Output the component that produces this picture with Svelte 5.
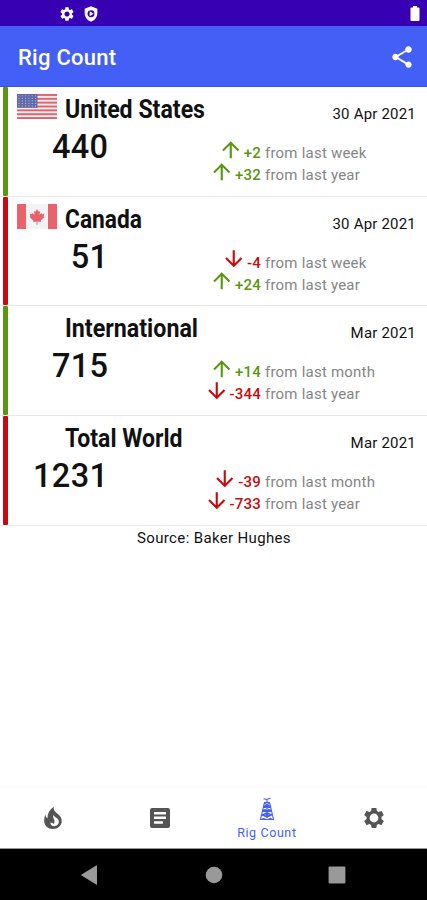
<script lang="ts">
	interface Change {
		value: number;
		period: string;
	}

	interface Region {
		name: string;
		width: number;
		flag?: 'us' | 'ca';
		count: number;
		date: string;
		up: boolean;
		changes: Change[];
	}

	const regions: Region[] = [
		{
			name: 'United States', width: 140, flag: 'us', count: 440, date: '30 Apr 2021', up: true,
			changes: [{ value: 2, period: 'week' }, { value: 32, period: 'year' }]
		},
		{
			name: 'Canada', width: 77, flag: 'ca', count: 51, date: '30 Apr 2021', up: false,
			changes: [{ value: -4, period: 'week' }, { value: 24, period: 'year' }]
		},
		{
			name: 'International', width: 133, count: 715, date: 'Mar 2021', up: true,
			changes: [{ value: 14, period: 'month' }, { value: -344, period: 'year' }]
		},
		{
			name: 'Total World', width: 117.5, count: 1231, date: 'Mar 2021', up: false,
			changes: [{ value: -39, period: 'month' }, { value: -733, period: 'year' }]
		}
	];

	const gear =
		'M19.43 12.98c.04-.32.07-.64.07-.98s-.03-.66-.07-.98l2.11-1.65c.19-.15.24-.42.12-.64l-2-3.46c-.12-.22-.39-.3-.61-.22l-2.49 1c-.52-.4-1.08-.73-1.69-.98l-.38-2.65C14.46 2.18 14.25 2 14 2h-4c-.25 0-.46.18-.49.42l-.38 2.65c-.61.25-1.17.59-1.69.98l-2.49-1c-.23-.09-.49 0-.61.22l-2 3.46c-.13.22-.07.49.12.64l2.11 1.65c-.04.32-.07.65-.07.98s.03.66.07.98l-2.11 1.65c-.19.15-.24.42-.12.64l2 3.46c.12.22.39.3.61.22l2.49-1c.52.4 1.08.73 1.69.98l.38 2.65c.03.24.24.42.49.42h4c.25 0 .46-.18.49-.42l.38-2.65c.61-.25 1.17-.59 1.69-.98l2.49 1c.23.09.49 0 .61-.22l2-3.46c.12-.22.07-.49-.12-.64l-2.11-1.65zM12 15.9c-2.15 0-3.9-1.75-3.9-3.9s1.75-3.9 3.9-3.9 3.9 1.75 3.9 3.9-1.75 3.9-3.9 3.9z';

	const signed = (n: number) => (n > 0 ? `+${n}` : `${n}`);
</script>

<div class="screen">
	<div class="status-bar">
		<svg class="status-gear" viewBox="0 0 24 24"><path d={gear} /></svg>
		<svg class="status-shield" viewBox="0 0 24 24">
			<path fill-rule="evenodd" d="M12 .5 2.500 4.200V11c0 5.900 4 10.900 9.500 12.500 5.500-1.600 9.500-6.600 9.500-12.500V4.200L12 .5zm0 6a5.200 5.200 0 1 1 0 10.400 5.200 5.200 0 0 1 0-10.400zM10 8v7.400l6-3.700z" />
		</svg>
		<svg class="status-battery" viewBox="0 0 10 15"><path d="M3 0h4v1.500h1.500q1 0 1 1V14q0 1-1 1h-7q-1 0-1-1V2.500q0-1 1-1H3z" /></svg>
	</div>

	<header class="app-bar">
		<h1>Rig Count</h1>
		<button type="button" aria-label="Share">
			<svg viewBox="0 0 24 24">
				<path d="M18 16.08c-.76 0-1.44.3-1.96.77L8.91 12.7c.05-.23.09-.46.09-.7s-.04-.47-.09-.7l7.050-4.110c.54.5 1.250.81 2.040.81 1.660 0 3-1.340 3-3s-1.340-3-3-3-3 1.340-3 3c0 .24.04.47.09.7L8.040 9.810C7.500 9.310 6.790 9 6 9c-1.660 0-3 1.340-3 3s1.340 3 3 3c.79 0 1.500-.31 2.040-.81l7.120 4.160c-.05.21-.08.43-.08.65 0 1.610 1.310 2.920 2.920 2.920s2.920-1.310 2.920-2.920-1.310-2.920-2.920-2.920z" />
			</svg>
		</button>
	</header>

	<main>
		{#each regions as region}
			<section class="region" class:up={region.up}>
				<div class="summary">
					<div class="heading">
						<div class="flag">
							{#if region.flag === 'us'}
								<svg viewBox="0 0 40 25">
									<rect width="40" height="25" fill="#f3eef2" />
									{#each [0, 1, 2, 3, 4, 5, 6] as i}
										<rect y={i * 3.846} width="40" height="1.923" fill="#e2636c" />
									{/each}
									<rect width="20.5" height="13.8" fill="#6068a6" />
									{#each [0, 1, 2, 3, 4] as r}
										{#each [0, 1, 2, 3, 4, 5] as c}
											<circle cx={2 + c * 3.3} cy={1.8 + r * 2.55} r=".65" fill="#b5b9dc" />
										{/each}
									{/each}
								</svg>
							{:else if region.flag === 'ca'}
								<svg viewBox="0 0 40 25">
									<rect width="40" height="25" fill="#f3f2f4" />
									<rect width="9" height="25" fill="#e9636d" />
									<rect x="31" width="9" height="25" fill="#e9636d" />
									<path fill="#e9606a" d="m20 5 1.500 2.700 1.700-.8-.8 4.200 2.200-2.200.5 1.300 2.300-.4-.8 2.600 1 .6-4 3.400.4 1.500-3.600-.5.1 3.300h-1l.1-3.300-3.600.5.4-1.500-4-3.400 1-.6-.8-2.600 2.300.4.5-1.300 2.200 2.200-.8-4.200 1.700.8z" />
								</svg>
							{/if}
						</div>
						<svg class="name" width={region.width} height="30">
							<text x="0" y="24" textLength={region.width} lengthAdjust="spacingAndGlyphs">{region.name}</text>
						</svg>
					</div>
					<div class="count">{region.count}</div>
				</div>
				<div class="details">
					<div class="date">{region.date}</div>
					{#each region.changes as change}
						<div class="change">
							<span class="delta" class:positive={change.value > 0}>
								<svg viewBox="0 0 24 24">
									{#if change.value > 0}
										<path d="m4 12 1.410 1.410L11 7.830V20h2V7.830l5.580 5.590L20 12l-8-8-8 8z" />
									{:else}
										<path d="m20 12-1.410-1.410L13 16.170V4h-2v12.170l-5.580-5.590L4 12l8 8 8-8z" />
									{/if}
								</svg>
								{signed(change.value)}
							</span>
							<span class="period">from last {change.period}</span>
						</div>
					{/each}
				</div>
			</section>
		{/each}
		<p class="source">Source: Baker Hughes</p>
	</main>

	<nav class="tabs">
		<div class="tab">
			<svg class="flame" viewBox="0 0 18 22">
				<path fill-rule="evenodd" d="M9.800 0c-.4 2.200.3 3.800 2.300 5.600C15.300 8.300 17.700 10.300 17.700 14c0 4.700-3.800 8-8.800 8S.2 18.700.2 14c0-2.300.3-4.200 1.100-6.300.4 1.800 1.100 2.900 2.200 3.500C3.700 7 5.200 2.500 9.800 0zM9.300 8c-.5 1.900.2 3.200.8 4.500.8 1.800.6 3.300-.7 4.500-.6-1-1.600-1.500-3.100-1.300.3 2.100 1.700 3.500 3.900 3.500 2.800 0 4.700-1.900 4.700-4.600 0-3.200-3.900-3.900-5.600-6.600z" />
			</svg>
		</div>
		<div class="tab">
			<svg class="article" viewBox="0 0 20 20">
				<path fill-rule="evenodd" d="M2 0h16q2 0 2 2v16q0 2-2 2H2q-2 0-2-2V2q0-2 2-2zM4 4v2.500h12V4zM4 8.500V11h12V8.500zM4 13.300v2.500h9v-2.500z" />
			</svg>
		</div>
		<div class="tab active">
			<svg class="rig" viewBox="0 0 16 24">
				<path d="M5 5.500h6M8 5.500V2M4.500 1.700l3.500.8 3.500-1.500M5.300 6 1.500 22.500h13L10.700 6M5 9.500h6M4 13.500h8M3 18h10M5.200 6l5.900 3.500-7 4 8.800 4.500-10.500 4.500M10.800 6 4.900 9.500l7.100 4L3 18l10.500 4.500" />
				<path class="dots" d="M6.500 8h3v2.500h-3zM6 12.500h4V15H6zM6.500 17h3v2.500h-3z" />
			</svg>
			<span>Rig Count</span>
		</div>
		<div class="tab">
			<svg class="settings" viewBox="0 0 24 24">
				<path d={gear} />
				<circle cx="12" cy="12" r="4.400" />
			</svg>
		</div>
	</nav>

	<footer class="system-nav">
		<svg viewBox="0 0 18 20"><path d="M16 .8v18.400q0 .8-.8.3L.5 10.500q-.7-.5 0-1L15.200.5q.8-.5.8.3z" /></svg>
		<svg viewBox="0 0 18 20"><circle cx="9" cy="10" r="8.300" /></svg>
		<svg viewBox="0 0 18 20"><rect x=".6" y="1.600" width="16.800" height="16.800" rx="1" /></svg>
	</footer>
</div>

<style>
	:global(body) {
		margin: 0;
		background: #fff;
	}

	.screen {
		width: 427px;
		height: 900px;
		display: flex;
		flex-direction: column;
		overflow: hidden;
		background: #fff;
		color: #111;
		font-family: Roboto, sans-serif;
	}

	svg {
		display: block;
		flex: none;
	}

	.status-bar {
		box-sizing: border-box;
		height: 26px;
		display: flex;
		align-items: center;
		gap: 8px;
		padding: 1px 7px 0 59px;
		background: #3700b3;
		fill: #fff;
	}

	.status-gear,
	.status-shield {
		width: 16px;
		height: 16px;
	}

	.status-battery {
		width: 10px;
		height: 15px;
		margin-left: auto;
	}

	.app-bar {
		box-sizing: border-box;
		height: 61px;
		display: flex;
		align-items: center;
		justify-content: space-between;
		padding: 3px 12px 0 18px;
		border-bottom: 1px solid #3b50e8;
		background: #445ff6;
		color: #fff;
	}

	h1 {
		margin: 0;
		padding-top: 1px;
		font-size: 22px;
		font-weight: 500;
		line-height: 28px;
		letter-spacing: 0.25px;
	}

	button {
		padding: 0;
		border: 0;
		background: none;
		fill: #fff;
	}

	button svg {
		width: 26px;
		height: 26px;
		margin-top: -2px;
	}

	main {
		flex: 1;
		min-height: 0;
	}

	.region {
		--accent: #c90a0d;
		box-sizing: border-box;
		height: 109.65px;
		display: flex;
		border-bottom: 1.5px solid #e8e8e8;
	}

	.region.up {
		--accent: #589810;
	}

	.region::before {
		content: '';
		width: 5px;
		margin-left: 3px;
		border-radius: 1px;
		background: var(--accent);
	}

	.summary {
		width: 192px;
		padding-left: 8.5px;
	}

	.heading {
		display: flex;
		padding-top: 7px;
		gap: 8.5px;
	}

	.flag {
		width: 40px;
		height: 25px;
	}

	.name {
		overflow: visible;
		font-size: 25px;
		font-weight: 700;
		fill: #111;
	}

	.count {
		width: 92px;
		margin-top: 3px;
		font-size: 32.5px;
		font-weight: 500;
		line-height: 40px;
		letter-spacing: 0.4px;
		text-align: right;
	}

	.details {
		flex: 1;
		display: flex;
		flex-direction: column;
		padding-right: 11px;
	}

	.date {
		margin: 17px 0 18px;
		font-size: 15px;
		line-height: 20px;
		letter-spacing: 0.2px;
		text-align: right;
	}

	.change {
		height: 22px;
		display: flex;
		align-items: center;
		gap: 4px;
		font-size: 15px;
		white-space: nowrap;
	}

	.delta {
		width: 52.5px;
		display: flex;
		align-items: center;
		justify-content: flex-end;
		gap: 0.5px;
		color: #c90a0d;
		fill: #c90a0d;
		font-weight: 500;
		letter-spacing: 0.2px;
	}

	.delta.positive {
		color: #589810;
		fill: #589810;
	}

	.delta svg {
		width: 25.5px;
		height: 25.5px;
		margin-top: -7px;
	}

	.period {
		color: #858585;
		letter-spacing: 0.22px;
	}

	.source {
		margin: 2px 0 0;
		padding-left: 1px;
		font-size: 15px;
		line-height: 20px;
		letter-spacing: 0.35px;
		text-align: center;
	}

	.tabs {
		height: 61px;
		display: flex;
		border-top: 1px solid #fafafa;
		border-bottom: 1px solid #999;
		fill: #555;
	}

	.tab {
		flex: 1;
		display: flex;
		flex-direction: column;
		align-items: center;
		justify-content: center;
	}

	.flame {
		width: 18px;
		height: 22px;
	}

	.article {
		width: 20px;
		height: 20px;
	}

	.settings {
		width: 24px;
		height: 24px;
	}

	.settings circle {
		fill: #fff;
	}

	.active {
		justify-content: flex-start;
		padding-top: 10px;
		color: #445ff6;
		font-size: 12.5px;
		line-height: 16px;
		letter-spacing: 0.6px;
	}

	.active span {
		margin-top: 4px;
	}

	.rig {
		width: 16px;
		height: 24px;
		fill: none;
		stroke: #445ff6;
		stroke-width: 1.1;
	}

	.dots {
		fill: #445ff6;
		stroke: none;
	}

	.system-nav {
		box-sizing: border-box;
		height: 51px;
		display: flex;
		align-items: center;
		justify-content: space-between;
		padding: 0 81px;
		background: #000;
		fill: #999;
	}

	.system-nav svg {
		width: 18px;
		height: 20px;
	}
</style>
